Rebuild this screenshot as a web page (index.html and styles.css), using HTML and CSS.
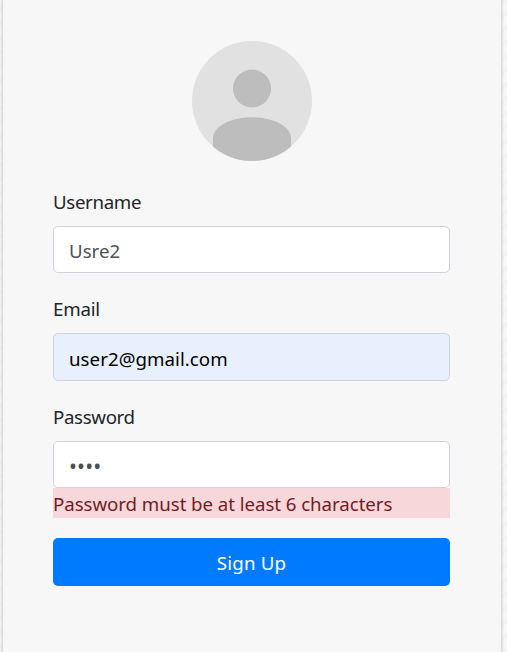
FILE: index.html
```html
<!DOCTYPE html>
<html lang="en">
<head>
<meta charset="utf-8">
<title>Sign Up</title>
<link rel="stylesheet" href="styles.css">
</head>
<body>
<main class="card">
  <svg class="avatar" viewBox="0 0 120 120" aria-hidden="true">
    <defs><clipPath id="round"><circle cx="60" cy="60" r="60"/></clipPath></defs>
    <g clip-path="url(#round)">
      <rect width="120" height="120" fill="#e1e1e1"/>
      <circle cx="60" cy="47.5" r="19" fill="#bdbdbd"/>
      <path d="M21 120V97C21 86 38 76.3 60 76.3S99 86 99 97V120Z" fill="#bdbdbd"/>
    </g>
  </svg>
  <form>
    <div class="group">
      <label class="tight" for="username">Username</label>
      <input id="username" class="control" type="text" value="Usre2">
    </div>
    <div class="group">
      <label for="email">Email</label>
      <input id="email" class="control filled" type="text" value="user2@gmail.com">
    </div>
    <div class="group">
      <label class="tight" for="password">Password</label>
      <input id="password" class="control secret" type="text" value="••••">
      <div class="error">Password must be at least 6 characters</div>
    </div>
    <button class="submit" type="button">Sign Up</button>
  </form>
</main>
</body>
</html>
```
FILE: styles.css
```css
* { box-sizing: border-box; }
html { height: 100%; overflow: hidden; }
body {
  margin: 0;
  height: 100%;
  font: 18.7px/30px "Noto Sans", "Open Sans", sans-serif;
  color: #212529;
  background: repeating-linear-gradient(135deg, #f7f7f7 0 5px, #f0f0f0 7px, #f7f7f7 10px);
}
.card {
  width: 498px;
  height: 652px;
  margin-left: 3px;
  padding: 41px 51px 0 50px;
  background: #f7f7f7;
  box-shadow: 0 0 2px 1px #c8c8c8;
}
.avatar { display: block; width: 120px; height: 120px; margin: 0 auto 24.6px; }
.group { margin-bottom: 20px; }
label { display: block; height: 30px; padding-top: 1px; margin-bottom: 10px; letter-spacing: -.2px; }
.tight { letter-spacing: -.35px; }
.control {
  display: block;
  width: 100%;
  height: 47.5px;
  padding: 2px 15px 0;
  border: 1px solid #ced4da;
  border-radius: 5px;
  background: #fff;
  color: #495057;
  font: inherit;
}
.filled { padding-top: 4px; background: #e8f0fe; color: #000; letter-spacing: .04px; }
.secret { padding-top: 3px; font-size: 21px; letter-spacing: .2px; }
.error { height: 30px; padding-top: 1px; background: #f8d7da; color: #721c24; white-space: nowrap; letter-spacing: -.06px; }
.submit {
  display: block;
  width: 100%;
  height: 47.5px;
  padding: 2px 0 0;
  border: 0;
  border-radius: 5px;
  background: #007bff;
  color: #fff;
  font: inherit;
  letter-spacing: .2px;
}
```
